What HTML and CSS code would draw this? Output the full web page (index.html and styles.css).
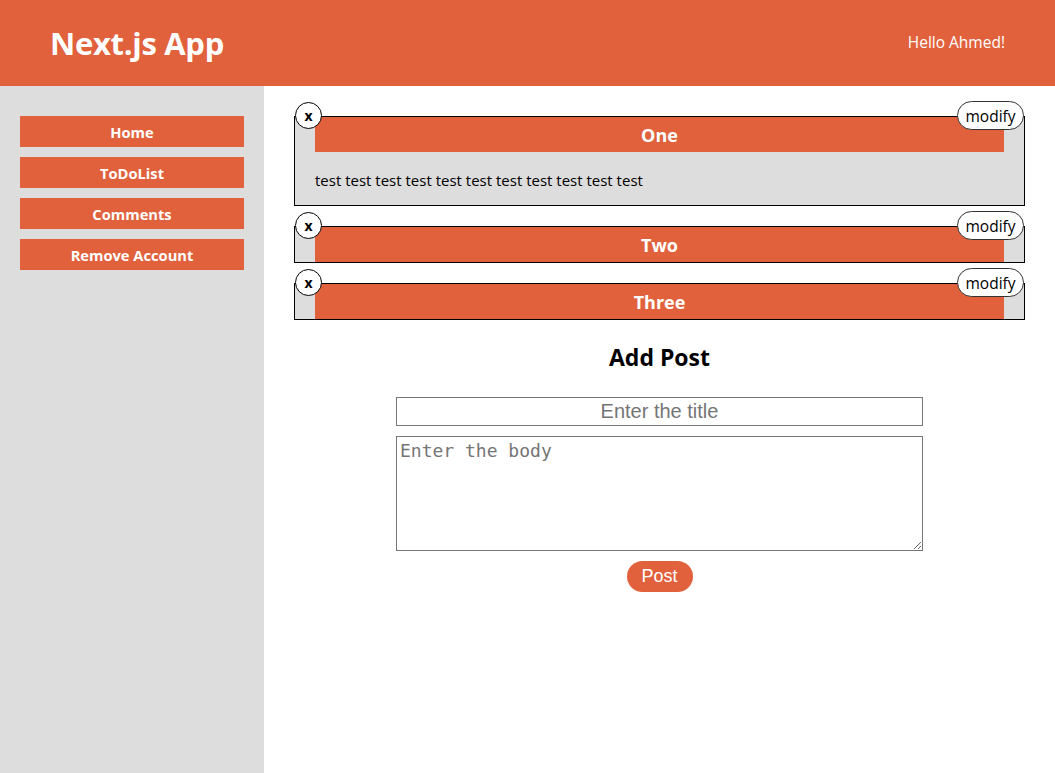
FILE: index.html
```html
<!DOCTYPE html>
<html>
<head>
<meta charset="utf-8">
<title>Next.js App</title>
<link rel="stylesheet" href="styles.css">
</head>
<body>
<header class="topbar">
  <h1 class="brand">Next.js App</h1>
  <span class="greeting">Hello Ahmed!</span>
</header>
<div class="layout">
  <aside class="sidebar">
    <nav class="nav">
      <a class="nav-btn" href="#">Home</a>
      <a class="nav-btn" href="#">ToDoList</a>
      <a class="nav-btn" href="#">Comments</a>
      <a class="nav-btn" href="#">Remove Account</a>
    </nav>
  </aside>
  <main class="main">
    <div class="posts">
      <article class="post">
        <button class="close-btn">x</button>
        <button class="modify-btn">modify</button>
        <h2 class="post-title">One</h2>
        <p class="post-body">test test test test test test test test test test test</p>
      </article>
      <article class="post">
        <button class="close-btn">x</button>
        <button class="modify-btn">modify</button>
        <h2 class="post-title">Two</h2>
      </article>
      <article class="post">
        <button class="close-btn">x</button>
        <button class="modify-btn">modify</button>
        <h2 class="post-title">Three</h2>
      </article>
    </div>
    <h2 class="form-title">Add Post</h2>
    <form class="post-form">
      <input class="title-input" type="text" placeholder="Enter the title">
      <textarea class="body-input" placeholder="Enter the body"></textarea>
      <button class="post-btn" type="button">Post</button>
    </form>
  </main>
</div>
</body>
</html>
```
FILE: styles.css
```css
html, body {
  margin: 0;
  padding: 0;
}
body {
  font-family: "Open Sans", "Noto Sans", sans-serif;
  background: #ffffff;
  color: #000;
}
.topbar {
  height: 86px;
  background: #e1613c;
  display: flex;
  align-items: center;
  justify-content: space-between;
  padding: 0 50px 0 50px;
  box-sizing: border-box;
  color: #fff;
}
.brand {
  margin: 0;
  font-size: 31px;
  font-weight: 700;
  letter-spacing: -0.3px;
}
.greeting {
  font-size: 15.5px;
  margin-top: -2px;
}
.layout {
  display: flex;
  min-height: 687px;
}
.sidebar {
  width: 264px;
  flex: none;
  background: #dddddd;
  padding: 30px 20px;
  box-sizing: border-box;
}
.nav {
  display: flex;
  flex-direction: column;
  gap: 10px;
}
.nav-btn {
  display: block;
  height: 31px;
  line-height: 33px;
  background: #e1613c;
  color: #fff;
  text-align: center;
  text-decoration: none;
  font-weight: 700;
  font-size: 14.7px;
}
.main {
  flex: 1;
  padding: 30px 30px;
  box-sizing: border-box;
}
.posts {
  display: flex;
  flex-direction: column;
  gap: 20px;
}
.post {
  position: relative;
  border: 1px solid #000;
  background: #dddddd;
  padding: 0 20px;
}
.post-title {
  margin: 0;
  height: 35px;
  line-height: 37px;
  background: #e1613c;
  color: #fff;
  text-align: center;
  font-size: 18px;
  font-weight: 700;
}
.post-body {
  margin: 0;
  padding: 18px 0 15px;
  font-size: 15px;
  line-height: 20px;
}
.close-btn {
  position: absolute;
  top: -15px;
  left: 0;
  width: 27px;
  height: 27px;
  border-radius: 50%;
  border: 1px solid #000;
  background: #fff;
  padding: 0;
  font-family: "Open Sans", sans-serif;
  font-weight: 700;
  font-size: 14px;
  line-height: 22px;
  color: #000;
}
.modify-btn {
  position: absolute;
  top: -16px;
  right: 0;
  width: 67px;
  height: 29px;
  border-radius: 15px;
  border: 1px solid #333;
  background: #fff;
  padding: 0;
  font-family: "Open Sans", sans-serif;
  font-size: 15.5px;
  color: #000;
}
.form-title {
  margin: 22px 0 25px;
  text-align: center;
  font-size: 23px;
  font-weight: 700;
  line-height: 30px;
}
.post-form {
  display: flex;
  flex-direction: column;
  align-items: center;
  gap: 10px;
}
.title-input {
  width: 527px;
  height: 29px;
  box-sizing: border-box;
  border: 1px solid #767676;
  font-family: "Liberation Sans", Arial, sans-serif;
  font-size: 20px;
  text-align: center;
  padding: 0;
}
.title-input::placeholder {
  color: #757575;
}
.body-input {
  width: 527px;
  height: 115px;
  box-sizing: border-box;
  border: 1px solid #767676;
  font-family: "DejaVu Sans Mono", monospace;
  font-size: 18px;
  padding: 3px 3px;
  margin: 0;
  resize: vertical;
}
.body-input::placeholder {
  color: #757575;
}
.post-btn {
  width: 66px;
  height: 31px;
  border: none;
  border-radius: 16px;
  background: #e1613c;
  color: #fff;
  font-family: "Liberation Sans", Arial, sans-serif;
  font-size: 18px;
  padding: 0;
}
```
